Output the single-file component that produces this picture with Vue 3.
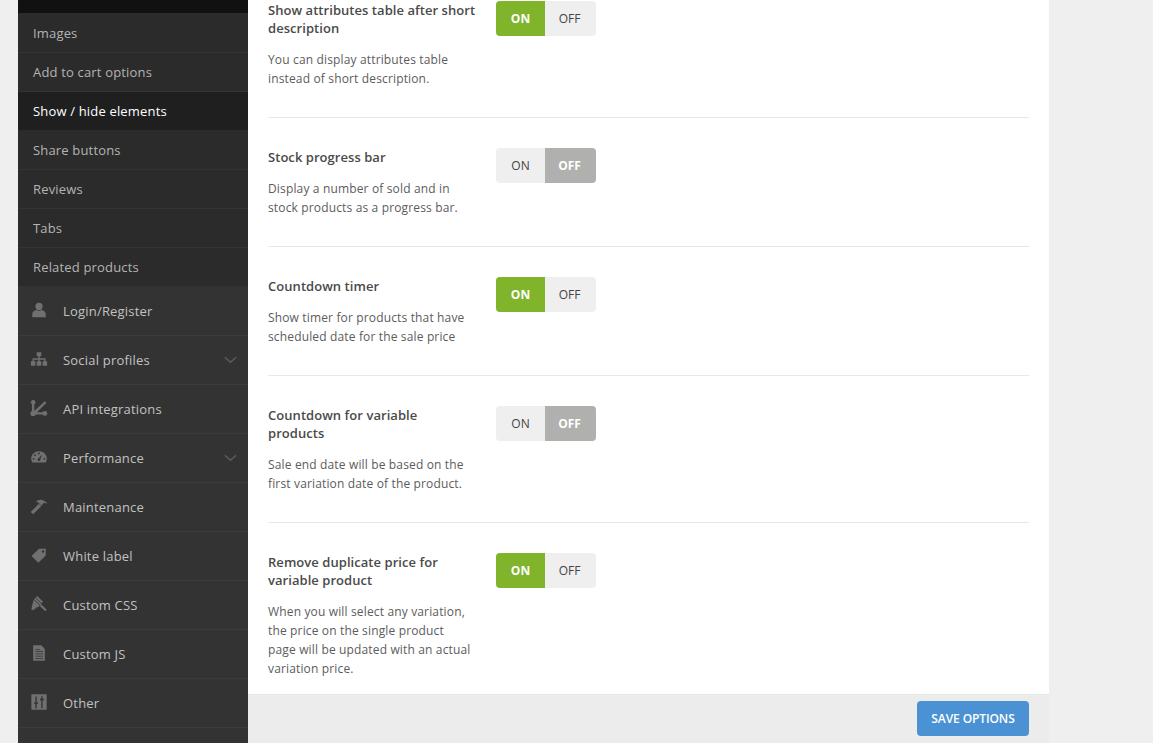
<template>
  <div class="page">
    <aside class="sidebar">
      <div class="top-strip"></div>
      <ul class="sub-menu">
        <li v-for="item in subItems" :key="item" class="sub-item" :class="{ active: item === activeItem }">{{ item }}</li>
      </ul>
      <ul class="main-menu">
        <li v-for="item in mainItems" :key="item.label" class="main-item">
          <svg class="icon" viewBox="0 0 20 20" v-html="item.icon"></svg>
          <span class="main-label">{{ item.label }}</span>
          <svg v-if="item.arrow" class="chevron" viewBox="0 0 14 8">
            <path d="M1 1l6 5.500L13 1" />
          </svg>
        </li>
      </ul>
    </aside>

    <main class="content">
      <div class="options">
        <div v-for="option in options" :key="option.title" class="row">
          <div class="text">
            <h4 class="title">{{ option.title }}</h4>
            <p class="desc">{{ option.desc }}</p>
          </div>
          <div class="toggle">
            <span class="side on-side" :class="{ checked: option.on }">ON</span>
            <span class="side off-side" :class="{ checked: !option.on }">OFF</span>
          </div>
        </div>
      </div>
      <footer class="footer">
        <button class="save">SAVE OPTIONS</button>
      </footer>
    </main>
  </div>
</template>

<script setup>
const activeItem = 'Show / hide elements'

const subItems = [
  'Images',
  'Add to cart options',
  'Show / hide elements',
  'Share buttons',
  'Reviews',
  'Tabs',
  'Related products'
]

// icon shapes are drawn on a 20x20 box
const mainItems = [
  {
    label: 'Login/Register',
    icon: '<circle cx="10" cy="6" r="4"/><path d="M2.500 18v-3.500C2.500 11.800 5 10.400 7 10c1.800 1 4.200 1 6 0 2 .4 4.500 1.800 4.500 4.500V18z"/>'
  },
  {
    label: 'Social profiles',
    arrow: true,
    icon: '<path d="M7.500 2.500h5v4.500h-1.700v2.300h6.400v3.200h1.800v5h-5v-5h1.700v-1.700h-4.900v1.700h1.700v5h-5v-5h1.700v-1.700H4.300v1.700H6v5H1v-5h1.800V9.300h6.400V7H7.500z"/>'
  },
  {
    label: 'API integrations',
    icon: '<circle cx="3.500" cy="3.500" r="2.500"/><circle cx="3.500" cy="16" r="3"/><circle cx="16.500" cy="16" r="2.700"/><path d="M2.200 3.500h2.600V16H2.200zM3.500 14.700h13v2.600h-13zM3.500 14.500L16.500 2.500l1.800 1.800L5.500 17z"/>'
  },
  {
    label: 'Performance',
    arrow: true,
    icon: '<path fill-rule="evenodd" d="M10 3.500c5 0 8.700 3.700 8.700 8.200 0 1.700-.5 3.100-1.300 4.300H2.600c-.8-1.200-1.300-2.600-1.300-4.300C1.300 7.200 5 3.500 10 3.500zM10 5a1 1 0 100 2 1 1 0 000-2zM5.500 7a1 1 0 100 2 1 1 0 000-2zM4 11a1 1 0 100 2 1 1 0 000-2zM16 11a1 1 0 100 2 1 1 0 000-2zM13.300 7.600l-3.900 4a1.500 1.500 0 102 1.400z"/>'
  },
  {
    label: 'Maintenance',
    icon: '<path d="M.8 16.800L9.800 7.500l2.700 2.700L3.400 19.300z"/><path d="M6.500 5.500C10 1.800 15 2.300 19.800 7.800c-2.500-1.400-4.800-1.200-5.800-.2l-1 2.500-4.200-4.300z"/>'
  },
  {
    label: 'White label',
    icon: '<path fill-rule="evenodd" d="M10 3h7.500v7.500L9.300 18.500 1.700 11zM14.500 4.800a1.300 1.300 0 100 2.600 1.300 1.300 0 000-2.600z"/>'
  },
  {
    label: 'Custom CSS',
    icon: '<path d="M8 1l6.500 6.500L12 10l6.500 6-1.500 2-6.500-6-2 2-1-1-1 2.500-1-1-1 2.500-3-1 1-5 1.500-5.500 1-1z"/><path d="M5 5.500l6.500 6.500M6.800 3.600l6 6" stroke="#333" fill="none"/>'
  },
  {
    label: 'Custom JS',
    icon: '<path fill-rule="evenodd" d="M3.500 1.500h9l4 4v13h-13zM6 5.500v1h5v-1zM6 8v1h8.500V8zM6 10.500v1h8.500v-1zM6 13v1h8.500v-1zM6 15.500v1h8.500v-1z"/>'
  },
  {
    label: 'Other',
    icon: '<path fill-rule="evenodd" d="M1.500 1.500h17v17h-17zM6 4v6.500H4.500V12H6v5h1.500v-5H9v-1.500H7.500V4zM12.500 3.500v3H11V8h1.500v9H14V8h1.500V6.500H14v-3z"/>'
  }
]

const options = [
  {
    title: 'Show attributes table after short description',
    desc: 'You can display attributes table instead of short description.',
    on: true
  },
  {
    title: 'Stock progress bar',
    desc: 'Display a number of sold and in stock products as a progress bar.',
    on: false
  },
  {
    title: 'Countdown timer',
    desc: 'Show timer for products that have scheduled date for the sale price',
    on: true
  },
  {
    title: 'Countdown for variable products',
    desc: 'Sale end date will be based on the first variation date of the product.',
    on: false
  },
  {
    title: 'Remove duplicate price for variable product',
    desc: 'When you will select any variation, the price on the single product page will be updated with an actual variation price.',
    on: true
  }
]
</script>

<style>
html,
body {
  height: 100%;
  margin: 0;
  overflow: hidden;
  background: #efefef;
}
</style>

<style scoped>
.page {
  display: flex;
  height: 743px;
  width: 1153px;
  padding-left: 18px;
  box-sizing: border-box;
  overflow: hidden;
  font-family: "Open Sans", sans-serif;
}

.sidebar {
  width: 230px;
  flex-shrink: 0;
  background: #333;
  overflow: hidden;
}

.top-strip {
  height: 13px;
  background: #111;
}

.sub-menu,
.main-menu {
  list-style: none;
  margin: 0;
  padding: 0;
}

.sub-menu {
  padding-top: 1px;
  background: #2b2b2b;
}

.sub-item {
  height: 39px;
  box-sizing: border-box;
  padding-left: 15px;
  line-height: 38px;
  font-size: 13px;
  letter-spacing: 0.17px;
  color: #b4b4b4;
  border-bottom: 1px solid #333;
}

.sub-item.active {
  background: #1f1f1f;
  color: #fff;
  border-bottom-color: #2b2b2b;
}

.main-item {
  display: flex;
  align-items: center;
  height: 49px;
  box-sizing: border-box;
  padding: 0 11px 0 12px;
  font-size: 13px;
  letter-spacing: 0.2px;
  color: #c2c2c2;
  border-bottom: 1px solid #3b3b3b;
}

.icon {
  width: 18px;
  height: 18px;
  margin-right: 15px;
  margin-top: -3px;
  fill: #707070;
  flex-shrink: 0;
}

.main-label {
  flex: 1;
}

.chevron {
  width: 13px;
  height: 8px;
  fill: none;
  stroke: #5c5c5c;
  stroke-width: 1.6;
}

.content {
  width: 801px;
  flex-shrink: 0;
  display: flex;
  flex-direction: column;
  background: #fff;
}

.options {
  flex: 1;
  min-height: 0;
  overflow: hidden;
  padding: 0 20px;
}

.row {
  display: flex;
  padding: 30px 0 29px;
  border-bottom: 1px solid #e8e8e8;
}

.row:first-child {
  padding-top: 1px;
}

.row:last-child {
  border-bottom: 0;
}

.text {
  width: 208px;
  margin-right: 20px;
  flex-shrink: 0;
}

.title {
  margin: 0 0 13px;
  font-size: 13px;
  letter-spacing: 0.05px;
  line-height: 18px;
  font-weight: 600;
  color: #4a4a4a;
}

.desc {
  width: 206px;
  margin: 0;
  font-size: 12px;
  letter-spacing: 0.15px;
  line-height: 19px;
  color: #5c5c5c;
}

.toggle {
  display: flex;
  width: 100px;
  height: 35px;
  border-radius: 4px;
  overflow: hidden;
  background: #efefef;
}

.side {
  box-sizing: border-box;
  line-height: 35px;
  text-align: center;
  font-size: 12px;
  font-weight: 400;
  color: #444;
}

.on-side {
  width: 49px;
}

.off-side {
  width: 51px;
  padding-right: 2px;
}

.on-side.checked {
  background: #80b42b;
  color: #fff;
  font-weight: 700;
}

.off-side.checked {
  background: #b0b0ae;
  color: #fff;
  font-weight: 700;
}

.footer {
  display: flex;
  justify-content: flex-end;
  height: 49px;
  box-sizing: border-box;
  padding: 6px 20px 0;
  background: #ececec;
  border-top: 1px solid #e6e6e6;
}

.save {
  width: 112px;
  height: 35px;
  border: 0;
  padding: 0;
  border-radius: 4px;
  background: #4b92d4;
  color: #fff;
  font-family: inherit;
  font-size: 12px;
  font-weight: 600;
  letter-spacing: -0.1px;
}
</style>
